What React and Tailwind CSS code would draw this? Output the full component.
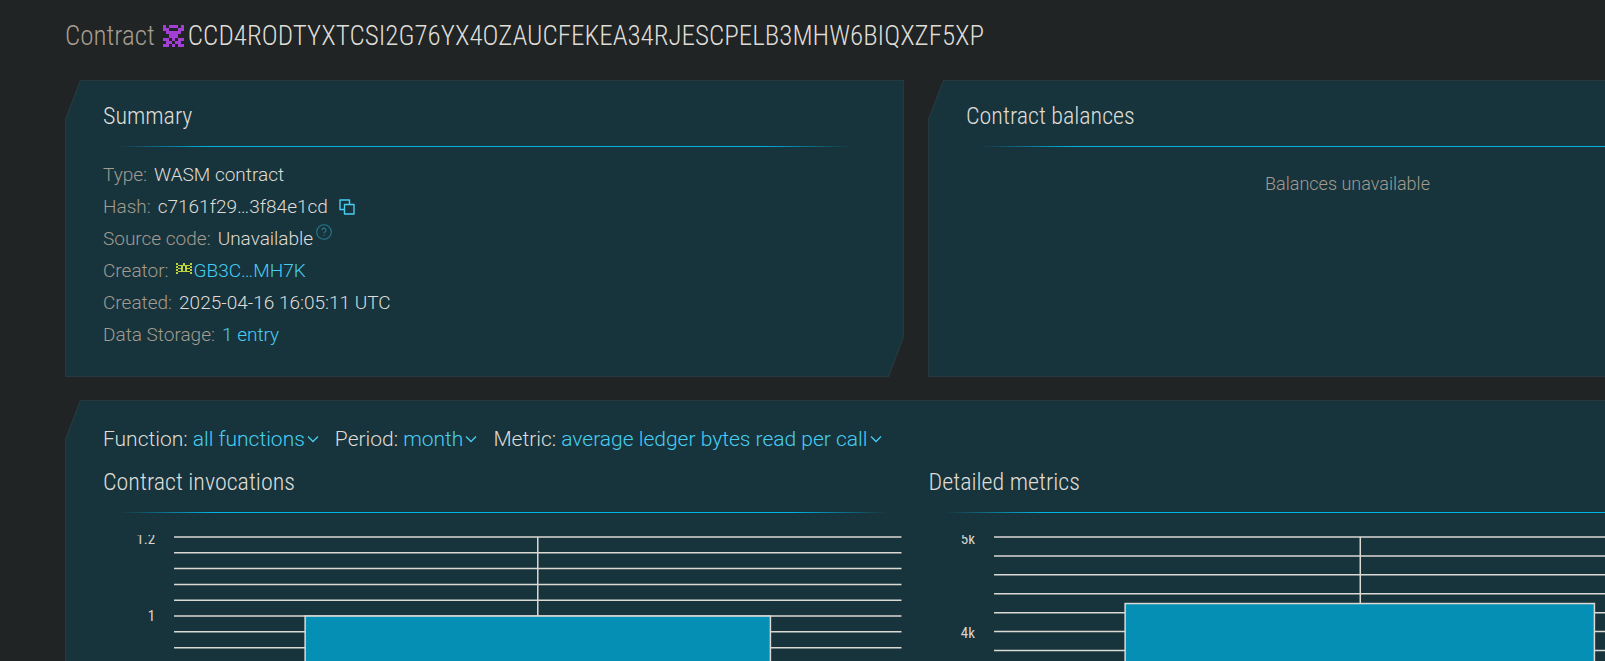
const CUT_TL = "[clip-path:polygon(15px_0,100%_0,100%_100%,0_100%,0_39px)]";
const CUT_BOTH = "[clip-path:polygon(15px_0,100%_0,100%_calc(100%_-_40px),calc(100%_-_15px)_100%,0_100%,0_39px)]";

function Panel({ cut, className = "", children }) {
  return (
    <section className={`flex bg-[#26393f] p-px ${cut} ${className}`}>
      <div className={`min-w-0 flex-1 bg-[#17343c] ${cut} px-[37px]`}>{children}</div>
    </section>
  );
}

function Heading({ children }) {
  return (
    <>
      <h3 className="font-['Roboto_Condensed',Roboto,sans-serif] text-2xl leading-8 font-light">{children}</h3>
      <div className="mt-[14px] h-px bg-[linear-gradient(to_right,transparent_2%,#00b4e4_14%,#00b4e4_86%,transparent_98%)]" />
    </>
  );
}

function Identicon({ rows, color, className }) {
  return (
    <svg viewBox="0 0 7 7" preserveAspectRatio="none" shapeRendering="crispEdges" fill={color} className={className} aria-hidden="true">
      {rows.flatMap((row, y) =>
        [...row].map((c, x) => (c === "x" ? <rect key={`${x}-${y}`} x={x} y={y} width="1" height="1" /> : null))
      )}
    </svg>
  );
}

const CONTRACT_ICON = ["x.xxx.x", "xx...xx", ".xxxxx.", "..xxx..", "xx.x.xx", ".xx.xx.", "xx.x.xx"];
const CREATOR_ICON = ["x..x..x", ".xxxxx.", "x.x.x.x", ".xx.xx.", "x.x.x.x", ".xxxxx.", "x.....x"];

function Row({ label, children }) {
  return (
    <div className="flex">
      <dt className="mr-[7px] text-[#a39b90]">{label}</dt>
      <dd className="flex">{children}</dd>
    </div>
  );
}

function Filter({ label, value }) {
  return (
    <span className="flex items-center">
      <span className="mr-[5px]">{label}</span>
      <button type="button" aria-label={`${label} ${value}`} className="flex cursor-pointer items-center text-[#48cdf3]">
        {value}
        <svg viewBox="0 0 12 8" className="ml-[2px] h-2 w-3" fill="none" stroke="currentColor" strokeWidth="1.3" aria-hidden="true">
          <path d="M1 1.5l5 5 5-5" />
        </svg>
      </button>
    </span>
  );
}

function Chart({ label, plot, lines, ticks, bar, mid }) {
  return (
    <svg role="img" aria-label={label} viewBox="0 0 800 380" className="mt-[22px] block w-full">
      <g stroke="#dcd9d4" strokeWidth="1.5">
        {lines.map((y) => (
          <line key={y} x1={plot.x1} x2={plot.x2} y1={y} y2={y} />
        ))}
        <line x1={mid} x2={mid} y1="2" y2="380" />
        <rect x={bar.x} y={bar.y} width={bar.w} height="400" fill="#058fb5" />
      </g>
      <g fill="#d8d5d0" textAnchor="end" className="font-['Roboto_Condensed',Roboto,sans-serif] text-[15px] font-normal">
        {ticks.map(([t, y]) => (
          <text key={t} x={plot.x1 - 19} y={y}>{t}</text>
        ))}
      </g>
    </svg>
  );
}

const range = (start, step, count) => Array.from({ length: count }, (_, i) => start + step * i);

export default function App() {
  return (
    <div className="h-screen overflow-hidden bg-[#202424] font-[Roboto,sans-serif] text-[19px] leading-8 font-light text-[#dfdcd7]">
      <main className="min-w-[1832px] px-[65px] pt-[18px]">
        <h1 className="flex items-center font-['Roboto_Condensed',Roboto,sans-serif] text-[27px] leading-9">
          <span className="mr-[8px] text-[#a69c8f]">Contract</span>
          <Identicon rows={CONTRACT_ICON} color="#a43fd6" className="mr-[4px] h-[22px] w-[21px]" />
          CCD4RODTYXTCSI2G76YX4OZAUCFEKEA34RJESCPELB3MHW6BIQXZF5XP
        </h1>

        <div className="mt-[26px] grid grid-cols-2 gap-6">
          <Panel cut={CUT_BOTH}>
            <div className="pt-[19px] pb-[25px]">
              <Heading>Summary</Heading>
              <dl className="mt-3">
                <Row label="Type:">WASM contract</Row>
                <Row label="Hash:">
                  c7161f29…3f84e1cd
                  <button type="button" aria-label="Copy hash" className="ml-[11px] flex cursor-pointer items-center text-[#48cdf3]">
                    <svg viewBox="0 0 16 16" className="size-4" fill="none" stroke="currentColor" strokeWidth="1.4" strokeLinejoin="round" aria-hidden="true">
                      <path d="M5 10.5H1V1h9.500v4M5.500 5.500h9.500v9.500H5.500z" />
                    </svg>
                  </button>
                </Row>
                <Row label="Source code:">
                  Unavailable
                  <svg viewBox="0 0 16 16" className="mt-px ml-[3px] size-4" fill="none" stroke="#267a91" strokeWidth="1.100" aria-hidden="true">
                    <circle cx="8" cy="8" r="7.300" />
                    <path d="M6 6.200a2 2 0 1 1 2.900 1.700c-.6.3-.9.6-.9 1.300v.4M8 10.900v1.200" />
                  </svg>
                </Row>
                <Row label="Creator:">
                  <a href="#creator" className="flex text-[#48cdf3]">
                    <Identicon rows={CREATOR_ICON} color="#bfd23c" className="mt-[8px] mr-[2px] h-[11px] w-[16px]" />
                    GB3C…MH7K
                  </a>
                </Row>
                <Row label="Created:">2025-04-16 16:05:11 UTC</Row>
                <Row label="Data Storage:">
                  <a href="#storage" className="text-[#48cdf3]">1 entry</a>
                </Row>
              </dl>
            </div>
          </Panel>
          <Panel cut={CUT_TL}>
            <div className="pt-[19px]">
              <Heading>Contract balances</Heading>
              <p className="mt-[21px] text-center text-lg leading-8 text-[#a39b90]">Balances unavailable</p>
            </div>
          </Panel>
        </div>

        <Panel cut={CUT_TL} className="mt-[23px]">
          <div className="flex gap-4 pt-[22px] text-[21px]">
            <Filter label="Function:" value="all functions" />
            <Filter label="Period:" value="month" />
            <Filter label="Metric:" value="average ledger bytes read per call" />
          </div>
          <div className="mt-[11px] grid grid-cols-2 gap-[25px]">
            <div>
              <Heading>Contract invocations</Heading>
              <Chart
                label="Contract invocations"
                plot={{ x1: 71, x2: 798 }}
                lines={range(2, 15.8, 25)}
                ticks={[["1.2", 9], ["1", 86]]}
                bar={{ x: 202, y: 81, w: 465 }}
                mid={434.5}
              />
            </div>
            <div>
              <Heading>Detailed metrics</Heading>
              <Chart
                label="Detailed metrics"
                plot={{ x1: 65, x2: 797 }}
                lines={range(2, 18.9, 21)}
                ticks={[["5k", 9], ["4k", 103]]}
                bar={{ x: 196, y: 68.5, w: 469 }}
                mid={431}
              />
            </div>
          </div>
        </Panel>
      </main>
    </div>
  );
}
